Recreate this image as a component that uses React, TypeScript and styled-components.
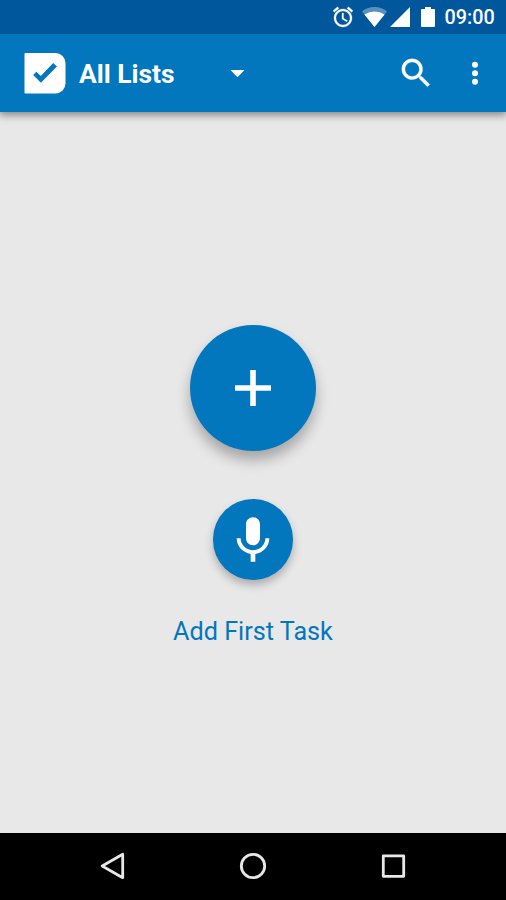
import React from "react";
import styled, { createGlobalStyle } from "styled-components";

const GlobalStyle = createGlobalStyle`
  * { box-sizing: border-box; }
  body { margin: 0; font-family: Roboto, sans-serif; }
  button { font: inherit; color: inherit; border: 0; padding: 0; background: none; }
  svg { display: block; flex: none; }
`;

const Screen = styled.div`
  width: 506px;
  height: 900px;
  display: flex;
  flex-direction: column;
  background: #e8e8e8;
  overflow: hidden;
`;

const StatusBar = styled.header`
  height: 34px;
  flex: none;
  display: flex;
  align-items: center;
  justify-content: flex-end;
  padding-right: 11px;
  background: #01579b;
  color: #fff;
`;

const StatusIcon = styled.svg<{ $gap: number }>`
  margin-right: ${(p) => p.$gap}px;
  fill: currentColor;
`;

const Clock = styled.span`
  width: 50.5px;
  padding-top: 2px;
  font-size: 19.8px;
  font-weight: 500;
  line-height: 34px;
  white-space: nowrap;
`;

const AppBar = styled.div`
  height: 78px;
  flex: none;
  display: flex;
  align-items: center;
  padding: 0 20px 0 24px;
  background: #0277bd;
  color: #fff;
  box-shadow: 0 2px 8px 1px rgba(0, 0, 0, 0.44);
  clip-path: inset(0 0 -16px 0);
`;

const Title = styled.h1`
  width: 151px;
  margin: 0 0 0 13px;
  font-size: 26.4px;
  font-weight: 700;
  line-height: 78px;
  padding-top: 1px;
  white-space: nowrap;
`;

const BarActions = styled.div`
  display: flex;
  align-items: center;
  margin-left: auto;
  gap: 31px;
`;

const IconButton = styled.button`
  display: flex;
  align-items: center;
  justify-content: center;
`;

const Content = styled.main`
  flex: 1;
  display: flex;
  flex-direction: column;
  align-items: center;
  padding-top: 212.6px;
`;

const RoundButton = styled.button<{ $size: number; $shadow: string }>`
  width: ${(p) => p.$size}px;
  height: ${(p) => p.$size}px;
  flex: none;
  display: flex;
  align-items: center;
  justify-content: center;
  border-radius: 50%;
  background: #0277bd;
  color: #fff;
  box-shadow: ${(p) => p.$shadow};

  & + & { margin-top: 48.6px; }
`;

const Caption = styled.p`
  margin: 37px 0 0;
  font-size: 25.2px;
  line-height: 30px;
  color: #0277bd;
  white-space: nowrap;
`;

const NavBar = styled.nav`
  height: 67px;
  flex: none;
  display: flex;
  align-items: center;
  justify-content: center;
  gap: 112px;
  padding-bottom: 1px;
  background: #000;
`;

const NavIcon = styled.svg`
  fill: none;
  stroke: #e8e8e8;
  stroke-width: 2.8;
  stroke-linejoin: round;
`;

export default function App() {
  return (
    <Screen>
      <GlobalStyle />
      <StatusBar>
        <StatusIcon $gap={9} width="20" height="22" viewBox="2 1 20 22">
          <path
            stroke="currentColor"
            strokeWidth=".3"
            d="M22 5.72l-4.6-3.86-1.29 1.53 4.6 3.86L22 5.72zM7.88 3.39L6.6 1.86 2 5.71l1.29 1.53 4.59-3.85zM12.5 8H11v6l4.75 2.85.75-1.23-4-2.37V8zM12 4c-4.97 0-9 4.03-9 9s4.02 9 9 9c4.97 0 9-4.03 9-9s-4.03-9-9-9zm0 16c-3.87 0-7-3.13-7-7s3.13-7 7-7 7 3.13 7 7-3.13 7-7 7z"
          />
        </StatusIcon>
        <StatusIcon $gap={3} width="25" height="20" viewBox="0 0 25 20">
          <path opacity=".35" d="M12.5 20L0 4.5Q5 0 12.5 0T25 4.5z" />
          <path d="M12.5 20L2.4 7.6Q7 4.6 12.5 4.6t10.1 3z" />
        </StatusIcon>
        <StatusIcon $gap={11} width="20" height="20" viewBox="0 0 20 20">
          <path d="M20 0v20H0z" />
        </StatusIcon>
        <StatusIcon $gap={9.5} width="14" height="20" viewBox="0 0 14 20">
          <path d="M4 0h6v2h3q1 0 1 1v16q0 1-1 1H1q-1 0-1-1V3q0-1 1-1h3z" />
        </StatusIcon>
        <Clock>09:00</Clock>
      </StatusBar>

      <AppBar>
        <svg width="42" height="42" viewBox="24 52 42 42">
          <path fill="#fff" d="M25.3 53H55.5a10 10 0 0 1 10 10V83.5a10 10 0 0 1-10 10H25.3q-.8 0-.8-.8V53.8q0-.8.8-.8z" />
          <path fill="#0277bd" d="M33.2 75l3.1-3.3 4.5 4.3L53.2 62.900l3.700 3.600L40.900 82.700z" />
        </svg>
        <Title>All Lists</Title>
        <IconButton aria-label="Choose list">
          <svg width="15" height="9" viewBox="0 -1 15 9">
            <path fill="#fff" d="M.5 0h14l-7 7.2z" />
          </svg>
        </IconButton>
        <BarActions>
          <IconButton aria-label="Search">
            <svg width="38.4" height="38.4" viewBox="0 0 24 24" fill="#fff">
              <path
                stroke="#fff"
                strokeWidth=".2"
                d="M15.5 14h-.79l-.28-.27C15.41 12.59 16 11.11 16 9.5 16 5.91 13.09 3 9.5 3S3 5.91 3 9.5 5.91 16 9.5 16c1.61 0 3.09-.59 4.23-1.57l.27.28v.79l5 4.99L20.49 19l-4.99-5zm-6 0C7.01 14 5 11.99 5 9.5S7.01 5 9.5 5 14 7.01 14 9.5 11.99 14 9.5 14z"
              />
            </svg>
          </IconButton>
          <IconButton aria-label="More options">
            <svg width="20" height="24" viewBox="0 0 20 24" fill="#fff">
              <circle cx="9" cy="3.8" r="3" />
              <circle cx="9" cy="12.2" r="3" />
              <circle cx="9" cy="20.7" r="3" />
            </svg>
          </IconButton>
        </BarActions>
      </AppBar>

      <Content>
        <RoundButton $size={126} $shadow="0 9px 14px rgba(0,0,0,.29)" aria-label="Add task">
          <svg width="38" height="38" viewBox="0 0 38 38">
            <path fill="#fff" d="M16.2 1h5.6v15.2H37v5.6H21.8V37h-5.6V21.8H1v-5.6h15.2z" />
          </svg>
        </RoundButton>
        <RoundButton $size={80.4} $shadow="0 5px 9px rgba(0,0,0,.26)" aria-label="Add task by voice">
          <svg width="56" height="56" viewBox="0 -.7 24 24" fill="#fff">
            <path d="M12 14c1.66 0 2.99-1.34 2.99-3L15 5c0-1.66-1.34-3-3-3S9 3.34 9 5v6c0 1.66 1.34 3 3 3zm5.3-3c0 3-2.54 5.1-5.3 5.1S6.7 14 6.7 11H5c0 3.41 2.72 6.23 6 6.72V21h2v-3.28c3.28-.48 6-3.3 6-6.72h-1.7z" />
          </svg>
        </RoundButton>
        <Caption>Add First Task</Caption>
      </Content>

      <NavBar>
        <NavIcon width="28" height="28" viewBox=".8 0 28 28">
          <path d="M24.5 2.3v23.4L4 14z" />
        </NavIcon>
        <NavIcon width="28" height="28" viewBox="0 0 28 28">
          <circle cx="14" cy="14" r="11.7" />
        </NavIcon>
        <NavIcon width="28" height="28" viewBox="0 0 28 28">
          <rect x="4.3" y="3.9" width="20.4" height="20.4" />
        </NavIcon>
      </NavBar>
    </Screen>
  );
}
